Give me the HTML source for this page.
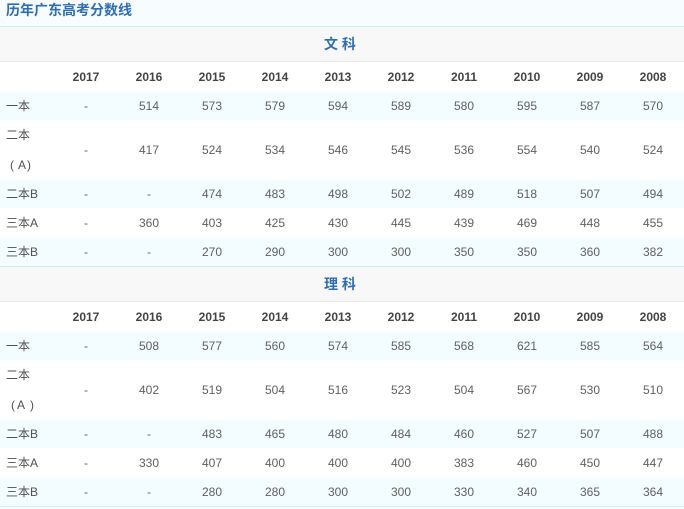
<!DOCTYPE html>
<html><head><meta charset="utf-8">
<style>
html,body{margin:0;padding:0;background:#f7fdff}
body{width:684px;height:509px;position:relative;overflow:hidden;font:12px/1 "Liberation Sans","Noto Sans CJK SC",sans-serif;color:#606060}
.b{position:absolute;left:0;width:684px}
.r{position:absolute;left:0;width:684px;display:flex;background:#fff}
.r.c{background:#f3fcff}
.r div{width:63px;text-align:center;flex:none}
.r div:first-child{width:48.5px;padding-left:6px;text-align:left;color:#505050}
.y{font-weight:bold;color:#444}
.t{position:absolute;left:6px;top:3px;line-height:14px;font-size:14px;font-weight:bold;color:#2f6db3;letter-spacing:0}
.s{position:absolute;left:0;width:680px;padding-right:4px;height:34px;background:#f8f8f8;border-bottom:1px solid #e8e8e8;text-align:center;line-height:34px;font-size:14px;font-weight:bold;color:#2f6db3}
.l{position:absolute;left:0;width:684px;height:1px;background:#cdeaf8}
</style></head><body>
<div class="t">历年广东高考分数线</div>
<div class="l" style="top:26px"></div>
<div class="s" style="top:27px">文 科</div>
<div class="r y" style="top:62px;height:30px;line-height:30px"><div></div><div>2017</div><div>2016</div><div>2015</div><div>2014</div><div>2013</div><div>2012</div><div>2011</div><div>2010</div><div>2009</div><div>2008</div></div>
<div class="r c" style="top:92px;height:28px;line-height:28px"><div>一本</div><div>-</div><div>514</div><div>573</div><div>579</div><div>594</div><div>589</div><div>580</div><div>595</div><div>587</div><div>570</div></div>
<div class="r" style="top:120px;height:60px;line-height:60px"><div style="line-height:30px">二本<br><span style="margin-left:4px">(</span><span style="margin-left:4px">A</span><span style="margin-left:1px">)</span></div><div>-</div><div>417</div><div>524</div><div>534</div><div>546</div><div>545</div><div>536</div><div>554</div><div>540</div><div>524</div></div>
<div class="r c" style="top:180px;height:28px;line-height:28px"><div>二本B</div><div>-</div><div>-</div><div>474</div><div>483</div><div>498</div><div>502</div><div>489</div><div>518</div><div>507</div><div>494</div></div>
<div class="r" style="top:208px;height:30px;line-height:30px"><div>三本A</div><div>-</div><div>360</div><div>403</div><div>425</div><div>430</div><div>445</div><div>439</div><div>469</div><div>448</div><div>455</div></div>
<div class="r c" style="top:238px;height:28px;line-height:28px"><div>三本B</div><div>-</div><div>-</div><div>270</div><div>290</div><div>300</div><div>300</div><div>350</div><div>350</div><div>360</div><div>382</div></div>
<div class="l" style="top:266px"></div>
<div class="s" style="top:267px">理 科</div>
<div class="r y" style="top:302px;height:30px;line-height:30px"><div></div><div>2017</div><div>2016</div><div>2015</div><div>2014</div><div>2013</div><div>2012</div><div>2011</div><div>2010</div><div>2009</div><div>2008</div></div>
<div class="r c" style="top:332px;height:28px;line-height:28px"><div>一本</div><div>-</div><div>508</div><div>577</div><div>560</div><div>574</div><div>585</div><div>568</div><div>621</div><div>585</div><div>564</div></div>
<div class="r" style="top:360px;height:60px;line-height:60px"><div style="line-height:30px">二本<br><span style="margin-left:5px">(</span><span style="margin-left:2px">A</span><span style="margin-left:5px">)</span></div><div>-</div><div>402</div><div>519</div><div>504</div><div>516</div><div>523</div><div>504</div><div>567</div><div>530</div><div>510</div></div>
<div class="r c" style="top:420px;height:28px;line-height:28px"><div>二本B</div><div>-</div><div>-</div><div>483</div><div>465</div><div>480</div><div>484</div><div>460</div><div>527</div><div>507</div><div>488</div></div>
<div class="r" style="top:448px;height:30px;line-height:30px"><div>三本A</div><div>-</div><div>330</div><div>407</div><div>400</div><div>400</div><div>400</div><div>383</div><div>460</div><div>450</div><div>447</div></div>
<div class="r c" style="top:478px;height:28px;line-height:28px"><div>三本B</div><div>-</div><div>-</div><div>280</div><div>280</div><div>300</div><div>300</div><div>330</div><div>340</div><div>365</div><div>364</div></div>
<div class="l" style="top:506px"></div>
</body></html>
